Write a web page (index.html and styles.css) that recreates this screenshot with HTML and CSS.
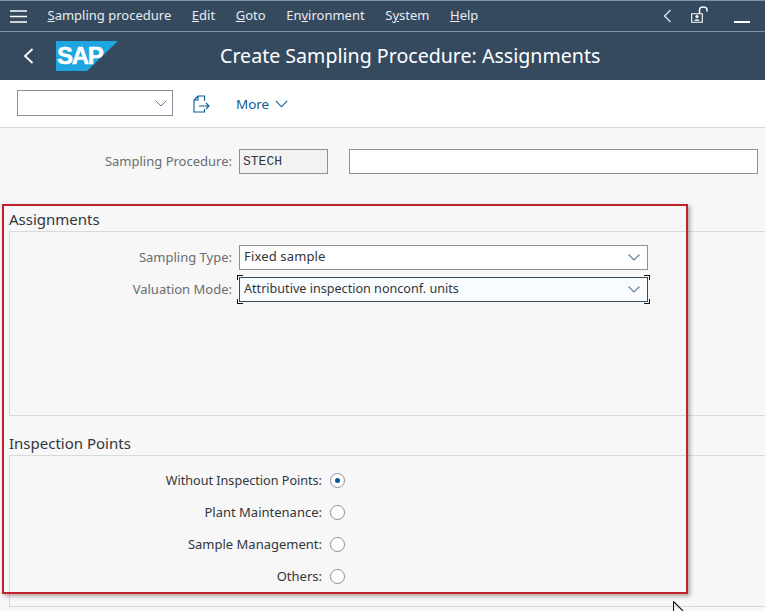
FILE: index.html
```html
<!DOCTYPE html>
<html lang="en">
<head>
<meta charset="utf-8">
<title>Create Sampling Procedure: Assignments</title>
<link rel="stylesheet" href="styles.css">
</head>
<body>
<div class="page">
  <nav class="menubar">
    <svg class="hamburger" width="17" height="13" viewBox="0 0 17 13"><path d="M0 1h17M0 6.500h17M0 12h17" stroke="#fff" stroke-width="1.600" fill="none"/></svg>
    <ul class="menu">
      <li><u>S</u>ampling procedure</li>
      <li><u>E</u>dit</li>
      <li><u>G</u>oto</li>
      <li>En<u>v</u>ironment</li>
      <li>S<u>y</u>stem</li>
      <li><u>H</u>elp</li>
    </ul>
    <div class="window-tools">
      <svg width="9" height="14" viewBox="0 0 9 14"><path d="M7.500 1 1.500 7l6 6" stroke="#e8edf2" stroke-width="1.200" fill="none"/></svg>
      <svg class="lock" width="18" height="17" viewBox="0 0 18 17"><path d="M.7 7.700h10.600v8.600H.7z" stroke="#fff" stroke-width="1.100" fill="none"/><circle cx="6" cy="10.500" r="1.600" fill="#fff"/><path d="M3.200 14.800c.3-2.200 5.300-2.200 5.600 0z" fill="#fff"/><path d="M8.500 7.500V4c0-4 7.500-4 7.500 0v1.500" stroke="#fff" stroke-width="1.500" fill="none"/></svg>
      <span class="minimize"></span>
    </div>
  </nav>
  <header class="titlebar">
    <svg class="back" width="11" height="16" viewBox="0 0 11 16"><path d="M9.500 1 2 8l7.500 7" stroke="#fff" stroke-width="1.800" fill="none"/></svg>
    <svg class="logo" width="62" height="30" viewBox="0 0 62 30" role="img" aria-label="SAP">
      <path d="M0 0h62L31 30H0z" fill="#1fa5e0"/>
      <text x="1" y="23" class="logo-text">SAP</text>
    </svg>
    <h1 class="title">Create Sampling Procedure: Assignments</h1>
  </header>
  <div class="toolbar">
    <div class="command">
      <svg width="12" height="7" viewBox="0 0 12 7"><path d="M.5.500 6 6l5.500-5.500" stroke="#5f7d95" stroke-width="1" fill="none"/></svg>
    </div>
    <svg class="exit-icon" width="17" height="18" viewBox="0 0 17 18"><path d="M7 1h4.500v5M11.500 14v3H1V5l4-4h2M5 1v4H1M6 11h10M13 8l3 3-3 3" stroke="#0a5a96" stroke-width="1.100" fill="none"/></svg>
    <div class="more">More
      <svg width="13" height="8" viewBox="0 0 13 8"><path d="M.8.800 6.500 6.800l5.700-6" stroke="#0a5a96" stroke-width="1.100" fill="none"/></svg>
    </div>
  </div>
  <main class="content">
    <div class="header-row">
      <span class="label">Sampling Procedure:</span>
      <span class="field readonly">STECH</span>
      <span class="field description"></span>
    </div>
    <section class="group assignments">
      <h2 class="group-title">Assignments</h2>
      <div class="group-body assign-body">
        <div class="row">
          <span class="label">Sampling Type:</span>
          <div class="field select"><span>Fixed sample</span>
            <svg width="12" height="7" viewBox="0 0 12 7"><path d="M.5.500 6 6l5.500-5.500" stroke="#5f7d95" stroke-width="1.100" fill="none"/></svg></div>
        </div>
        <div class="row">
          <span class="label">Valuation Mode:</span>
          <div class="field select focused"><span>Attributive inspection nonconf. units</span>
            <svg width="12" height="7" viewBox="0 0 12 7"><path d="M.5.500 6 6l5.500-5.500" stroke="#5f7d95" stroke-width="1.100" fill="none"/></svg>
            <i class="bracket tl"></i><i class="bracket bl"></i><i class="bracket tr"></i><i class="bracket br"></i>
          </div>
        </div>
      </div>
    </section>
    <section class="group inspection">
      <h2 class="group-title">Inspection Points</h2>
      <div class="group-body radio-body">
        <div class="radio-row"><span class="radio-label long">Without Inspection Points:</span><span class="radio checked"></span></div>
        <div class="radio-row"><span class="radio-label">Plant Maintenance:</span><span class="radio"></span></div>
        <div class="radio-row"><span class="radio-label">Sample Management:</span><span class="radio"></span></div>
        <div class="radio-row"><span class="radio-label">Others:</span><span class="radio"></span></div>
      </div>
    </section>
  </main>
  <div class="annotation"></div>
  <svg class="cursor" width="12" height="10" viewBox="0 0 12 10"><path d="M.5.500V10M.5.500 10 10" stroke="#111" stroke-width="1.100" fill="#fff"/></svg>
</div>
</body>
</html>
```
FILE: styles.css
```css
* { box-sizing: border-box; }
html, body { margin: 0; padding: 0; }
body { width: 765px; height: 611px; overflow: hidden; background: #f7f7f7; font-family: "Noto Sans", "Open Sans", sans-serif; }
.page { position: relative; width: 765px; height: 611px; overflow: hidden; display: flex; flex-direction: column; }

.menubar { height: 32px; flex: none; display: flex; align-items: center; background: #354a5f; border-top: 1px solid #8295a6; border-bottom: 1px solid #8295a6; color: #e8edf2; font-size: 13px; padding-left: 10px; }
.hamburger { flex: none; }
.menu { list-style: none; display: flex; gap: 20.600px; margin: -2px 0 0 20.500px; padding: 0; flex: 1; white-space: nowrap; }
.window-tools { display: flex; align-items: center; margin-right: 15px; }
.window-tools .lock { margin-left: 19px; margin-bottom: 4px; }
.minimize { display: block; width: 16px; height: 2px; background: #fff; margin-left: 25px; margin-top: 12px; }

.titlebar { position: relative; height: 48px; flex: none; display: flex; align-items: center; background: #354a5f; padding-left: 23px; }
.logo { margin-left: 22px; flex: none; }
.logo-text { font-family: "Liberation Sans", sans-serif; font-weight: 700; font-size: 24px; fill: #fff; stroke: #fff; stroke-width: .5px; letter-spacing: -1.300px; }
.title { margin: -2px 0 0 102px; font-size: 19.600px; font-weight: 400; color: #fff; white-space: nowrap; }

.toolbar { height: 48px; flex: none; display: flex; align-items: center; background: #fff; border-bottom: 1px solid #d9d9d9; padding-left: 17px; }
.command { width: 156px; height: 26px; border: 1px solid #89919a; background: #fff; display: flex; align-items: center; justify-content: flex-end; padding-right: 5px; margin-top: -1px; }
.exit-icon { margin-left: 20px; flex: none; }
.more { margin-left: 26px; display: flex; align-items: center; gap: 6px; font-size: 13.400px; color: #0a5a96; }

.content { flex: 1; display: flex; flex-direction: column; background: #f7f7f7; color: #666; font-size: 13px; }
.label { width: 223px; text-align: right; color: #6a6d70; flex: none; }
.field { display: flex; align-items: center; height: 25px; border: 1px solid #89919a; background: #fff; color: #32363a; flex: none; }
.header-row { display: flex; align-items: center; margin: 20px 0 0 9px; height: 26px; }
.readonly { width: 89px; margin-left: 7px; background: #f2f2f2; font-family: "Liberation Mono", monospace; font-size: 13px; padding-left: 3px; }
.description { width: 409px; margin-left: 21px; }

.group-title { margin: -1px 0 1px; padding-left: 9px; font-size: 15px; font-weight: 400; color: #32363a; height: 22px; line-height: 22px; }
.group-body { margin-left: 9px; border-left: 1px solid #d9d9d9; border-top: 1px solid #d9d9d9; border-bottom: 1px solid #d9d9d9; }
.assignments { margin-top: 35px; }
.assign-body { height: 185px; padding-top: 13px; display: flex; flex-direction: column; gap: 7px; }
.row { display: flex; align-items: center; height: 25px; }
.row .label { width: 222px; margin-top: -2px; }
.select { position: relative; width: 409px; margin-left: 7px; justify-content: space-between; padding: 0 7px 3px 4px; letter-spacing: .15px; }
.select svg { margin-top: 3px; }
.focused { border-color: #354a5f; background: #f9fcff; font-size: 12.600px; letter-spacing: 0; }
.bracket { position: absolute; width: 6px; height: 5px; border: 0 solid #111; }
.tl { left: -3px; top: -3px; border-width: 1.500px 0 0 1.500px; }
.bl { left: -3px; bottom: -3px; border-width: 0 0 1.500px 1.500px; }
.tr { right: -3px; top: -3px; border-width: 1.500px 1.500px 0 0; }
.br { right: -3px; bottom: -3px; border-width: 0 1.500px 1.500px 0; }

.inspection { margin-top: 17px; }
.radio-body { height: 152px; padding-top: 8px; }
.radio-row { display: flex; align-items: center; height: 32px; width: 335px; justify-content: flex-end; gap: 8px; }
.radio-label { color: #32363a; font-size: 13px; }
.radio-label.long { font-size: 12.600px; }
.radio { width: 15px; height: 15px; border: 1px solid #89919a; border-radius: 50%; background: #fff; display: flex; align-items: center; justify-content: center; }
.checked::after { content: ""; width: 5px; height: 5px; border-radius: 50%; background: #0a5a96; }

.annotation { position: absolute; left: 2px; top: 204px; width: 686px; height: 390px; border: 2px solid #c1222a; box-shadow: 2px 2px 4px rgba(90, 60, 60, .45); pointer-events: none; }
.cursor { position: absolute; left: 673px; top: 601px; }
```
